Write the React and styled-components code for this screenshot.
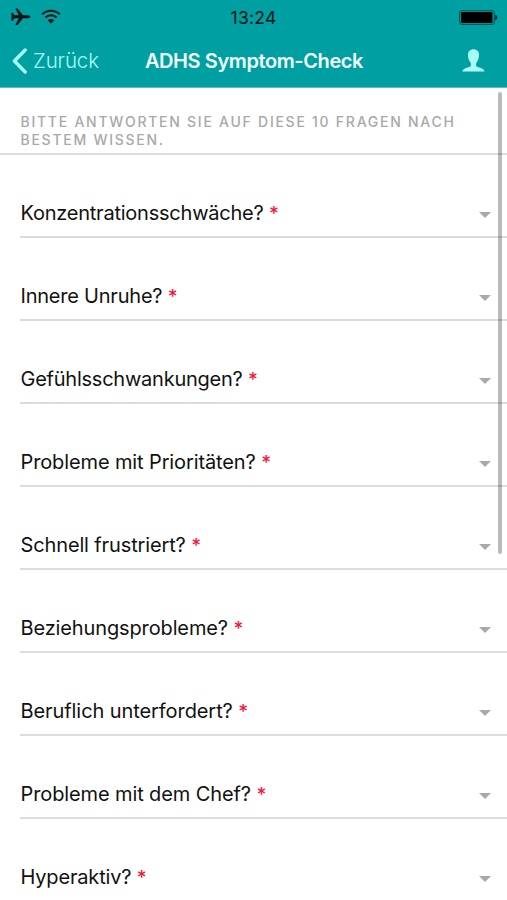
import styled, { createGlobalStyle } from "styled-components";

const questions = [
  { label: "Konzentrationsschwäche?", tracking: -0.23 },
  { label: "Innere Unruhe?", tracking: -0.22 },
  { label: "Gefühlsschwankungen?", tracking: -0.24 },
  { label: "Probleme mit Prioritäten?", tracking: -0.12 },
  { label: "Schnell frustriert?", tracking: -0.13 },
  { label: "Beziehungsprobleme?", tracking: -0.13 },
  { label: "Beruflich unterfordert?", tracking: -0.08 },
  { label: "Probleme mit dem Chef?", tracking: -0.11 },
  { label: "Hyperaktiv?", tracking: -0.17 },
];

const StatusBar = () => (
  <Status>
    <StatusIcons>
      <svg width="20" height="18" viewBox="0 0 20 18">
        <path
          d="M0.2 4.8 H1.6 L3.6 7.3 H7.8 L4.4 0.6 H6.6 L12 7.3 H16.2 C18.4 7.3 19.4 8 19.4 8.8 C19.4 9.6 18.4 10.3 16.2 10.3 H12 L6.6 17 H4.4 L7.8 10.3 H3.6 L1.6 12.8 H0.2 L0.6 8.8 Z"
          fill="#041516"
        />
      </svg>
      <svg width="20" height="16" viewBox="0 0 20 16">
        <g fill="none" stroke="#041516" strokeWidth="2">
          <path d="M1.2 5.3 C6.2 0.5 13.8 0.5 18.8 5.3" />
          <path d="M4.4 8.6 C7.6 5.6 12.4 5.6 15.6 8.6" />
        </g>
        <path d="M6.7 11.3 C8.6 9.6 11.4 9.6 13.3 11.3 L10 14.6 Z" fill="#041516" />
      </svg>
    </StatusIcons>
    <Time>13:24</Time>
    <Battery>
      <svg width="39" height="15" viewBox="0 0 39 15">
        <rect x="0.7" y="0.7" width="34.6" height="13.6" rx="2" fill="none" stroke="#04494b" strokeWidth="1" />
        <rect x="2" y="2" width="31.5" height="11" rx="0.7" fill="#000" />
        <path d="M36.3 4.8 C38.9 5.4 38.9 9.6 36.3 10.2 Z" fill="#041516" />
      </svg>
    </Battery>
  </Status>
);

const NavBar = () => (
  <Nav>
    <Back type="button">
      <svg width="15" height="26" viewBox="0 0 15 26">
        <path d="M13.2 2 L2.4 13 L13.2 24" fill="none" stroke="currentColor" strokeWidth="3.4" strokeLinecap="round" strokeLinejoin="round" />
      </svg>
      Zurück
    </Back>
    <Title>ADHS Symptom-Check</Title>
    <Profile type="button" aria-label="Profil">
      <svg width="23" height="23" viewBox="0 0 23 23">
        <path
          d="M11.5 0.2 C8 0.2 6 2.4 6 5.8 C6 8.8 6.8 11.6 8.4 13.4 C9.1 14.2 9.1 16.3 8.5 17.2 C7.4 18.7 1 18.5 0.4 22.4 H22.6 C22 18.5 15.6 18.7 14.5 17.2 C13.9 16.3 13.9 14.2 14.6 13.4 C16.2 11.6 17 8.8 17 5.8 C17 2.4 15 0.2 11.5 0.2 Z"
          fill="currentColor"
        />
      </svg>
    </Profile>
  </Nav>
);

const Question = ({ label, tracking }) => (
  <Row>
    <Label $tracking={tracking}>
      {label} <Required>*</Required>
    </Label>
    <Caret />
  </Row>
);

const App = () => {
  return (
    <>
      <GlobalStyle />
      <Screen>
        <Header>
          <StatusBar />
          <NavBar />
        </Header>
        <Intro>Bitte antworten Sie auf diese 10 Fragen nach bestem Wissen.</Intro>
        <List>
          {questions.map(question => (
            <Question key={question.label} {...question} />
          ))}
        </List>
        <ScrollThumb />
      </Screen>
    </>
  );
};

export default App;

/* ---------------------------- Styled Components --------------------------- */

const GlobalStyle = createGlobalStyle`
  * {
    box-sizing: border-box;
  }

  body {
    margin: 0;
    overflow: hidden;
    font-family: Inter, "Liberation Sans", sans-serif;
  }

  svg {
    display: block;
  }
`;

const Screen = styled.main`
  position: relative;
  width: 100%;
  height: 100vh;
  overflow: hidden;
  background-color: #fff;
`;

const Header = styled.header`
  height: 88px;
  background-color: #009fa2;
  border-bottom: 1px solid #5dbdc0;
`;

const Status = styled.section`
  height: 34px;
  padding: 0 9px 0 11px;
  display: grid;
  grid-template-columns: 1fr auto 1fr;
  align-items: center;
`;

const StatusIcons = styled.div`
  display: flex;
  align-items: center;
  gap: 10px;
`;

const Time = styled.span`
  margin-right: 2px;
  font-size: 17.5px;
  letter-spacing: 0.25px;
  color: #041516;
`;

const Battery = styled.div`
  justify-self: end;
`;

const Nav = styled.nav`
  height: 53px;
  padding: 0 22px 0 12px;
  display: grid;
  grid-template-columns: 1fr auto 1fr;
  align-items: center;
`;

const Back = styled.button`
  padding: 0;
  border: none;
  background: none;
  display: flex;
  align-items: center;
  gap: 6px;
  font-family: inherit;
  font-size: 20.5px;
  font-weight: 300;
  letter-spacing: -0.1px;
  color: #a9fbf4;
`;

const Title = styled.h1`
  margin: 0 0 0 11px;
  font-size: 20px;
  font-weight: 600;
  letter-spacing: -0.4px;
  color: #f2ffff;
`;

const Profile = styled.button`
  padding: 0;
  border: none;
  background: none;
  justify-self: end;
  color: #a9fbf4;
`;

const Intro = styled.p`
  height: 67px;
  margin: 0;
  padding: 25px 40px 0 20.5px;
  border-bottom: 2px solid #dcdcdc;
  font-size: 14px;
  font-weight: 500;
  line-height: 18px;
  letter-spacing: 1.74px;
  text-transform: uppercase;
  color: #a8a8a8;
`;

const List = styled.section`
  padding-left: 20px;
`;

const Row = styled.div`
  height: 83px;
  padding: 34px 16px 0 0.5px;
  display: flex;
  align-items: center;
  justify-content: space-between;
  border-bottom: 2px solid #dcdcdc;
`;

const Label = styled.span`
  font-size: 20px;
  letter-spacing: ${props => props.$tracking}px;
  color: #111;
`;

const Required = styled.span`
  font-size: 19px;
  font-weight: 500;
  color: #f5173f;
`;

const Caret = styled.i`
  margin-top: 4px;
  border: 6px solid transparent;
  border-top-color: #a9a9a9;
  border-bottom: none;
`;

const ScrollThumb = styled.div`
  position: absolute;
  top: 92px;
  right: 5px;
  width: 4px;
  height: 462px;
  border-radius: 2px;
  background-color: rgba(0, 0, 0, 0.27);
`;
